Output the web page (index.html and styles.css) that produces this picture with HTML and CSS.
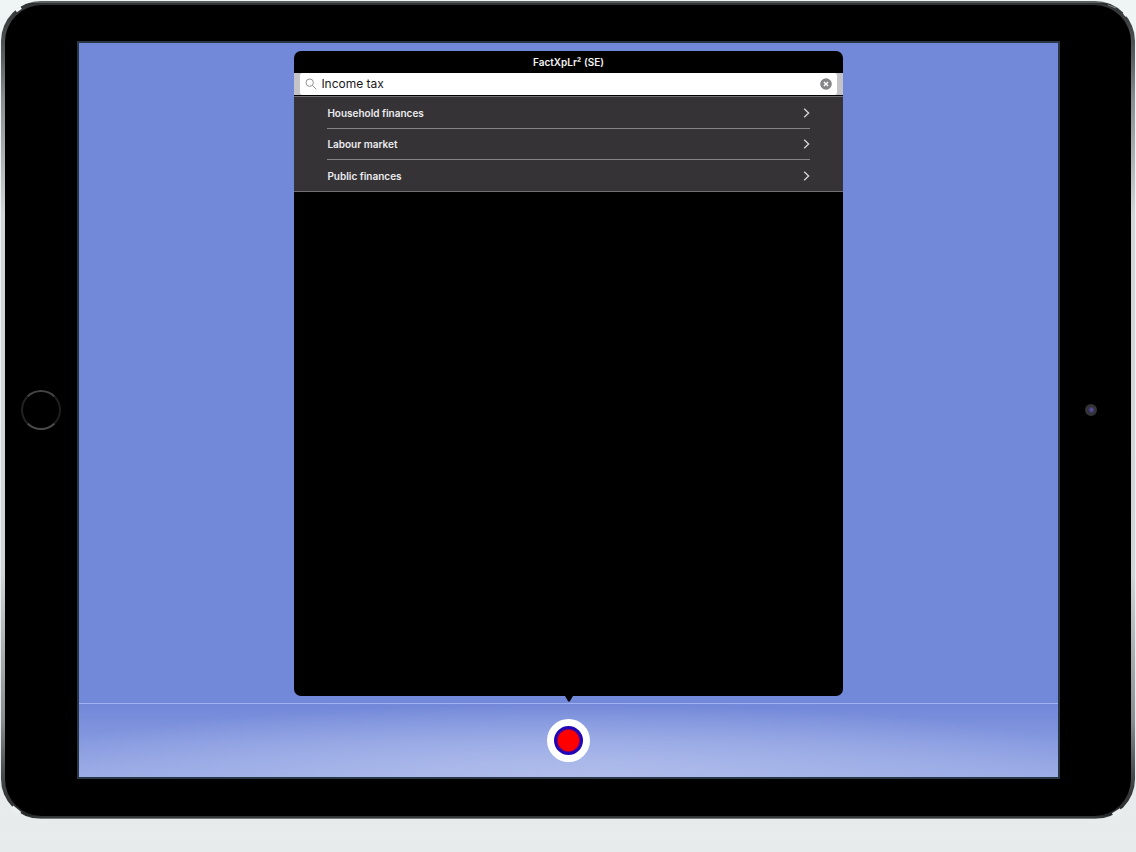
FILE: index.html
```html
<!DOCTYPE html>
<html lang="en">
<head>
<meta charset="utf-8">
<title>FactXpLr² (SE)</title>
<link rel="stylesheet" href="styles.css">
</head>
<body>
<div class="device">
  <div class="face">
    <div class="side side-home"><button class="home" aria-label="Home"></button></div>
    <main class="screen">
      <section class="popover">
        <h1 class="title">FactXpLr² (SE)</h1>
        <div class="search-bar">
          <label class="search">
            <svg class="search-icon" viewBox="0 0 12 12" aria-hidden="true"><circle cx="4.7" cy="4.7" r="3.7"/><path d="M7.4 7.4 11.2 11.2"/></svg>
            <input class="search-input" type="text" value="Income tax" aria-label="Search">
            <button class="clear" aria-label="Clear"><svg viewBox="0 0 12 12" aria-hidden="true"><circle cx="6" cy="6" r="5.8"/><path d="M3.9 3.9 8.1 8.1M8.1 3.9 3.9 8.1"/></svg></button>
          </label>
        </div>
        <nav class="list">
          <a class="row" href="#household">Household finances<svg class="chevron" viewBox="0 0 7 10" aria-hidden="true"><path d="M1.2 .8 5.600 5 1.2 9.2"/></svg></a>
          <a class="row" href="#labour">Labour market<svg class="chevron" viewBox="0 0 7 10" aria-hidden="true"><path d="M1.2 .8 5.600 5 1.2 9.2"/></svg></a>
          <a class="row" href="#public">Public finances<svg class="chevron" viewBox="0 0 7 10" aria-hidden="true"><path d="M1.2 .8 5.600 5 1.2 9.2"/></svg></a>
        </nav>
      </section>
      <svg class="arrow" viewBox="0 0 8 7" aria-hidden="true"><path d="M0 0H8L5 5Q4 6.500 3 5Z"/></svg>
      <footer class="toolbar"><button class="record" aria-label="Menu"></button></footer>
    </main>
    <div class="side side-camera"><span class="camera"></span></div>
  </div>
  <svg class="glint glint-tl" viewBox="0 0 40 40" aria-hidden="true"><path class="bright" d="M15 10 20 6.500"/></svg>
  <svg class="glint glint-tr" viewBox="0 0 40 40" aria-hidden="true"><path class="bright" d="M8.500 15 11 11.500"/><path class="soft" d="M19 7 27 4"/></svg>
  <svg class="glint glint-bl" viewBox="0 0 40 40" aria-hidden="true"><path class="gap" d="M11 12 19 5.500"/></svg>
  <svg class="glint glint-br" viewBox="0 0 40 40" aria-hidden="true"><path class="gap" d="M14 9 22 4"/></svg>
</div>
</body>
</html>
```
FILE: styles.css
```css
* { box-sizing: border-box; }

body {
  display: flex;
  min-height: 100vh;
  margin: 0;
  padding: 1px 1px 33px;
  background: linear-gradient(#eff4f5, #e8ebec);
  font-family: Inter, "Liberation Sans", sans-serif;
}

button { border: 0; padding: 0; cursor: pointer; }

.device {
  position: relative;
  display: flex;
  flex: 1;
  padding: 4px 4px 3px;
  border-radius: 40px;
  background:
    linear-gradient(#5c6061 0 2px, #2e3233 2px 4px, transparent 4px calc(100% - 3px), #333637 calc(100% - 3px) calc(100% - 1px), #777a7c calc(100% - 1px)),
    linear-gradient(#2c3031, #5d6062 7%, #8b8e90 12%, #d2d5d6 26%, #d2d5d6 70%, #8b8e90 88%, #4d5052 94%, #222425);
}

.face {
  display: grid;
  flex: 1;
  grid-template-columns: 72px 1fr 71px;
  padding: 36px 0 37px;
  border-radius: 37px;
  background: #000;
}

.side { display: flex; align-items: center; justify-content: center; }
.side-camera { padding-right: 9px; }

.home {
  width: 40px;
  height: 40px;
  border: 2px solid;
  border-color: #444 #1f1f1f #4a4a4a #222;
  border-radius: 50%;
  background: #000;
}

.camera {
  width: 12px;
  height: 12px;
  border: 3px solid #343437;
  border-radius: 50%;
  background: radial-gradient(circle at 60% 45%, #6259ad, #2b2947 80%);
}

.screen {
  display: flex;
  flex-direction: column;
  align-items: center;
  padding-top: 8px;
  border: 2px solid #293643;
  background: #7288d8;
}

.popover {
  flex: 1;
  width: 56%;
  overflow: hidden;
  border-radius: 7px;
  background: #000;
}

.title {
  margin: 0;
  color: #f2f2f2;
  font-size: 10px;
  font-weight: 600;
  line-height: 22px;
  text-align: center;
}

.search-bar { padding: 0 6px; background: #c4c4c8; }

.search {
  display: flex;
  align-items: center;
  gap: 4px;
  height: 22px;
  padding: 0 5px;
  border-radius: 3px;
  background: #fff;
}

.search-icon {
  width: 12px;
  height: 12px;
  fill: none;
  stroke: #919196;
  stroke-width: 1;
}

.search-input {
  flex: 1;
  min-width: 0;
  border: 0;
  padding: 0 0 2px;
  outline: 0;
  background: transparent;
  color: #18181a;
  font: 12px Inter, "Liberation Sans", sans-serif;
}

.clear { width: 12px; height: 12px; background: transparent; }
.clear svg { display: block; fill: #858589; }
.clear path { stroke: #fff; stroke-width: 1.4; }

.list {
  margin-top: 1px;
  padding: 1px 33px 0;
  border-top: 1px solid #717173;
  border-bottom: 1px solid #717173;
  background: #353336;
}

.row {
  display: flex;
  align-items: center;
  justify-content: space-between;
  height: 31px;
  border-bottom: 1px solid #848486;
  color: #ececee;
  font-size: 10px;
  font-weight: 600;
  text-decoration: none;
}
.row:last-child { border-bottom: 0; }

.chevron {
  width: 7px;
  height: 10px;
  fill: none;
  stroke: #d2d2d4;
  stroke-width: 1.4;
}

.arrow { width: 8px; height: 7px; }

.toolbar {
  display: flex;
  align-items: center;
  justify-content: center;
  align-self: stretch;
  height: 74px;
  padding-bottom: 1px;
  border-top: 1px solid #a0b2f1;
  background:
    radial-gradient(ellipse 60% 100% at 50% 100%, #b0bdeb, #b0bdeb00),
    linear-gradient(#7288d8, #7b90dc 25%, #98a9e5);
}

.record {
  width: 43px;
  height: 43px;
  border: 7px solid #fff;
  border-radius: 50%;
  background: radial-gradient(circle, #f00 0 10px, #2106b5 12px);
}

.glint {
  position: absolute;
  width: 40px;
  height: 40px;
  fill: none;
  pointer-events: none;
}
.glint-tl { top: 0; left: 0; }
.glint-tr { top: 0; right: 0; transform: scaleX(-1); }
.glint-bl { bottom: 0; left: 0; transform: scaleY(-1); }
.glint-br { right: 0; bottom: 0; transform: scale(-1); }
.soft { stroke: #85888a; stroke-width: 1; }
.bright { stroke: #f4f7f7; stroke-width: 3; }
.gap { stroke: #eceff0; stroke-width: 4; }
```
